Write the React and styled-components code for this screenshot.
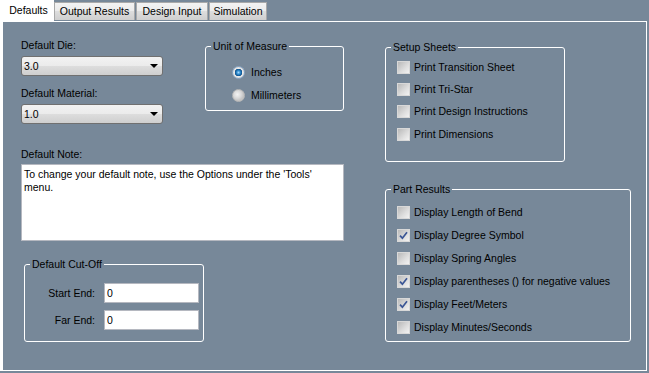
import styled, { createGlobalStyle } from 'styled-components'

const Global = createGlobalStyle`
  html, body {
    margin: 0;
    padding: 0;
    background-color: #778899;
    font-family: "Liberation Sans", Arial, sans-serif;
    font-size: 10.5px;
    color: #000;
  }
  * { box-sizing: border-box; }
`

const Window = styled.div`
  width: 649px;
  height: 373px;
  overflow: hidden;
`

const TabStrip = styled.div`
  height: 21px;
  display: flex;
  align-items: flex-start;
`

const Tab = styled.div`
  width: ${p => p.$w}px;
  height: ${p => (p.$active ? 21 : 18)}px;
  margin-top: ${p => (p.$active ? 0 : 2)}px;
  padding-left: ${p => (p.$active ? 3 : 0)}px;
  display: flex;
  align-items: center;
  justify-content: center;
  line-height: 13px;
  white-space: nowrap;
  background: ${p => (p.$active ? '#fff' : 'linear-gradient(#f3f3f3, #ebebeb 50%, #dddddd 50%, #cfcfcf)')};
  border: ${p => (p.$active ? 'none' : '1px solid #a9a9a9')};
  border-bottom: none;
  margin-right: ${p => (p.$active ? 0 : 1)}px;
  padding-bottom: ${p => (p.$active ? 1 : 0)}px;
`

const Panel = styled.div`
  width: 647px;
  height: 350px;
  border: 1px solid #fff;
  border-left-width: 3px;
  display: flex;
  padding: 17px 0 0 18px;
`

const LeftCol = styled.div`
  width: 323px;
  display: flex;
  flex-direction: column;
`

const RightCol = styled.div`
  margin-left: 41px;
  display: flex;
  flex-direction: column;
`

const TopRow = styled.div`
  display: flex;
  align-items: flex-start;
`

const ComboCol = styled.div`
  width: 142px;
  display: flex;
  flex-direction: column;
`

const Label = styled.div`
  line-height: 13px;
  margin-top: ${p => p.$mt || 0}px;
  white-space: nowrap;
`

const Combo = styled.div`
  margin-top: 4px;
  height: 20px;
  border: 1px solid #707070;
  border-radius: 3px;
  background: linear-gradient(#f2f2f2, #ebebeb 50%, #dddddd 50%, #cfcfcf);
  display: flex;
  align-items: center;
  justify-content: space-between;
  padding: 0 4px 0 2px;
  line-height: 13px;
`

const Arrow = styled.span`
  width: 0;
  height: 0;
  border-left: 4px solid transparent;
  border-right: 4px solid transparent;
  border-top: 4px solid #000;
`

const Group = styled.div`
  position: relative;
  width: ${p => p.$w}px;
  height: ${p => p.$h}px;
  margin: ${p => p.$m || '0'};
  border: 1px solid #fff;
  border-radius: 3px;
  padding: ${p => p.$pad || '0'};
  display: flex;
  flex-direction: column;
  gap: ${p => p.$gap || 0}px;
`

const Legend = styled.span`
  position: absolute;
  top: -7px;
  left: 5px;
  padding: 0 2px;
  line-height: 13px;
  background-color: #778899;
  white-space: nowrap;
`

const OptionRow = styled.div`
  display: flex;
  align-items: center;
  height: ${p => p.$h}px;
  white-space: nowrap;
  line-height: 13px;
`

const Radio = styled.span`
  width: 13px;
  height: 13px;
  border-radius: 50%;
  flex: none;
  margin-right: 6px;
  border: 1px solid ${p => (p.$on ? '#8aa8c8' : '#b8b8b8')};
  background: ${p =>
    p.$on
      ? 'radial-gradient(circle at 50% 50%, #9fd8ff 0, #2a86c8 2px, #0d4f8a 3.5px, #e9e9e9 4px, #d4d4d4 6px)'
      : 'radial-gradient(circle at 40% 40%, #f4f4f4 0, #d8d8d8 4px, #c4c4c4 6px)'};
`

const Box = styled.span`
  width: 13px;
  height: 13px;
  flex: none;
  margin-right: 4px;
  border: 1px solid #d8d8d8;
  background: linear-gradient(135deg, #b9b9b9, #dedede 60%, #f2f2f2);
  display: flex;
  align-items: center;
  justify-content: center;
`

const NoteBox = styled.textarea`
  margin-top: 3px;
  width: 323px;
  height: 77px;
  border: 1px solid #b5b8c0;
  background: #fff;
  padding: 3px 2px;
  font: inherit;
  line-height: 13px;
  color: #000;
  resize: none;
  outline: none;
  overflow: hidden;
`

const FieldRow = styled.div`
  display: flex;
  align-items: center;
  height: 20px;
`

const FieldLabel = styled.span`
  width: 70px;
  text-align: right;
  line-height: 13px;
  margin-right: 9px;
`

const Field = styled.input`
  width: 95px;
  height: 20px;
  border: 1px solid #b5b8c0;
  background: #fff;
  padding: 0 2px;
  font: inherit;
  color: #000;
  outline: none;
`

function Check({ on }) {
  return (
    <Box>
      {on && (
        <svg width="9" height="9" viewBox="0 0 9 9">
          <path d="M1 4.6 L3.4 7.2 L8 1.2" fill="none" stroke="#3b5695" strokeWidth="1.7" />
        </svg>
      )}
    </Box>
  )
}

const setupSheets = [
  'Print Transition Sheet',
  'Print Tri-Star',
  'Print Design Instructions',
  'Print Dimensions',
]

const partResults = [
  ['Display Length of Bend', false],
  ['Display Degree Symbol', true],
  ['Display Spring Angles', false],
  ['Display parentheses () for negative values', true],
  ['Display Feet/Meters', true],
  ['Display Minutes/Seconds', false],
]

export default function App() {
  return (
    <Window>
      <Global />
      <TabStrip>
        <Tab $active $w={54}>Defaults</Tab>
        <Tab $w={81}>Output Results</Tab>
        <Tab $w={72}>Design Input</Tab>
        <Tab $w={58}>Simulation</Tab>
      </TabStrip>
      <Panel>
        <LeftCol>
          <TopRow>
            <ComboCol>
              <Label>Default Die:</Label>
              <Combo>3.0<Arrow /></Combo>
              <Label $mt={11}>Default Material:</Label>
              <Combo>1.0<Arrow /></Combo>
            </ComboCol>
            <Group $w={139} $h={65} $m="7px 0 0 42px" $pad="19px 0 0 26px" $gap={10}>
              <Legend>Unit of Measure</Legend>
              <OptionRow $h={13}><Radio $on />Inches</OptionRow>
              <OptionRow $h={13}><Radio />Millimeters</OptionRow>
            </Group>
          </TopRow>
          <Label $mt={24}>Default Note:</Label>
          <NoteBox readOnly value="To change your default note, use the Options under the 'Tools' menu." />
          <Group $w={180} $h={78} $m="23px 0 0 3px" $pad="18px 0 0 0" $gap={7}>
            <Legend>Default Cut-Off</Legend>
            <FieldRow>
              <FieldLabel>Start End:</FieldLabel>
              <Field readOnly value="0" />
            </FieldRow>
            <FieldRow>
              <FieldLabel>Far End:</FieldLabel>
              <Field readOnly value="0" />
            </FieldRow>
          </Group>
        </LeftCol>
        <RightCol>
          <Group $w={180} $h={115} $m="8px 0 0 0" $pad="8px 0 0 11px">
            <Legend>Setup Sheets</Legend>
            {setupSheets.map(t => (
              <OptionRow key={t} $h={22.4}><Check />{t}</OptionRow>
            ))}
          </Group>
          <Group $w={246} $h={153} $m="27px 0 0 0" $pad="11px 0 0 11px">
            <Legend>Part Results</Legend>
            {partResults.map(([t, on]) => (
              <OptionRow key={t} $h={23}><Check on={on} />{t}</OptionRow>
            ))}
          </Group>
        </RightCol>
      </Panel>
    </Window>
  )
}
